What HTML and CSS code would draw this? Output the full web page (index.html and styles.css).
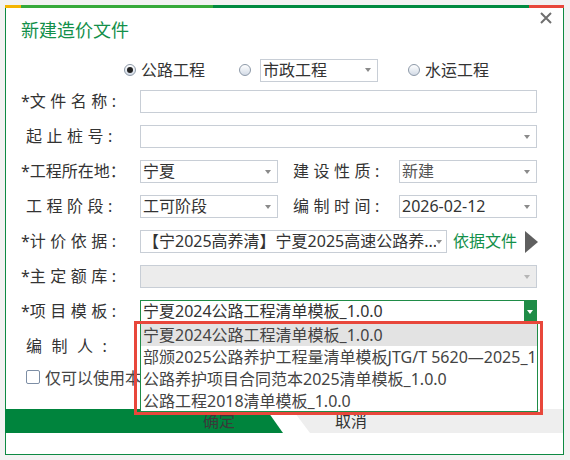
FILE: index.html
```html
<!DOCTYPE html>
<html lang="zh-CN">
<head>
<meta charset="utf-8">
<title>新建造价文件</title>
<link rel="stylesheet" href="styles.css">
</head>
<body>
<div class="dialog">
  <div class="stripe"><span class="s-yellow"></span><span class="s-lgreen"></span><span class="s-dgreen"></span><span class="s-red"></span></div>
  <div class="header">
    <div class="title">新建造价文件</div>
    <svg class="close" viewBox="0 0 12 12" width="12" height="12"><path d="M1 1L11 11M11 1L1 11" stroke="#6f6f6f" stroke-width="2" fill="none"/></svg>
  </div>

  <div class="radios">
    <span class="dot on"></span><span class="rtext">公路工程</span>
    <span class="dot d2"></span>
    <span class="field select w-sz"><span class="txt">市政工程</span><i class="caret"></i></span>
    <span class="dot d3"></span><span class="rtext">水运工程</span>
  </div>

  <div class="form">
    <div class="row">
      <span class="lbl"><b class="req">*</b><span class="sp">文件名称:</span></span>
      <span class="field w-full"></span>
    </div>
    <div class="row">
      <span class="lbl nostar"><span class="sp">起止桩号:</span></span>
      <span class="field select w-full"><span class="txt"></span><i class="caret"></i></span>
    </div>
    <div class="row">
      <span class="lbl"><b class="req">*</b>工程所在地：</span>
      <span class="field select w-half"><span class="txt">宁夏</span><i class="caret"></i></span>
      <span class="lbl2"><span class="sp">建设性质:</span></span>
      <span class="field select w-half"><span class="txt muted">新建</span><i class="caret"></i></span>
    </div>
    <div class="row">
      <span class="lbl nostar"><span class="sp">工程阶段:</span></span>
      <span class="field select w-half"><span class="txt">工可阶段</span><i class="caret"></i></span>
      <span class="lbl2"><span class="sp">编制时间:</span></span>
      <span class="field select w-half"><span class="txt">2026-02-12</span><i class="caret"></i></span>
    </div>
    <div class="row">
      <span class="lbl"><b class="req">*</b><span class="sp">计价依据:</span></span>
      <span class="field select w-jj"><span class="txt">【宁2025高养清】宁夏2025高速公路养...</span><i class="caret small"></i></span>
      <span class="link">依据文件</span>
      <svg class="play" viewBox="0 0 13 22" width="13" height="22"><path d="M0 0L13 11L0 22Z" fill="#5f5f5f"/></svg>
    </div>
    <div class="row">
      <span class="lbl"><b class="req">*</b><span class="sp">主定额库:</span></span>
      <span class="field select disabled w-full"><span class="txt"></span><i class="caret"></i></span>
    </div>
    <div class="row">
      <span class="lbl"><b class="req">*</b><span class="sp">项目模板:</span></span>
      <span class="field active w-full">
        <span class="txt">宁夏2024公路工程清单模板_1.0.0</span>
        <span class="gbtn"><i class="caret white"></i></span>
        <ul class="list">
          <li class="hl">宁夏2024公路工程清单模板_1.0.0</li>
          <li>部颁2025公路养护工程量清单模板JTG/T 5620—2025_1.0.0</li>
          <li>公路养护项目合同范本2025清单模板_1.0.0</li>
          <li>公路工程2018清单模板_1.0.0</li>
        </ul>
        <span class="mark"></span>
      </span>
    </div>
    <div class="row">
      <span class="lbl nostar"><span class="sp2">编制人:</span></span>
    </div>
  </div>

  <div class="check"><span class="box"></span><span>仅可以使用本</span></div>

  <div class="buttons">
    <div class="btn ok">确定</div>
    <div class="btn cancel">取消</div>
  </div>
</div>
</body>
</html>
```

FILE: styles.css
```css
* { box-sizing: border-box; }
html, body { margin: 0; }
body {
  background: #f2f2f2;
  padding: 5px 0 0 5px;
  font-family: "Noto Sans", "Noto Sans CJK SC", sans-serif;
  font-size: 16px;
  color: #333;
}

.dialog {
  position: relative;
  width: 559px;
  height: 450px;
  background: #fff;
  border: 1px solid #0e8a43;
  border-top: 0;
  display: flex;
  flex-direction: column;
}

.stripe { display: flex; height: 3px; margin: 0 -1px; flex: none; }
.s-yellow { width: 16px; background: #f4b400; }
.s-lgreen { width: 192px; background: #36a93a; }
.s-dgreen { flex: 1; background: #008a40; }
.s-red { width: 35px; background: #e8473b; }

.header {
  display: flex;
  justify-content: space-between;
  align-items: flex-start;
  height: 40px;
  padding: 0 11px 0 15px;
  flex: none;
}
.title { margin-top: 10px; font-size: 18px; line-height: 24px; color: #13904a; }
.close { margin-top: 4px; }

.radios {
  display: flex;
  align-items: center;
  height: 24px;
  margin-top: 10px;
  padding-left: 118px;
  flex: none;
}
.dot {
  width: 12px; height: 12px;
  border-radius: 50%;
  border: 1px solid #8d99a8;
  background: linear-gradient(#ffffff, #d3dbe6);
  display: flex; align-items: center; justify-content: center;
  flex: none;
}
.dot.on::after { content: ""; width: 6px; height: 6px; border-radius: 50%; background: #222; }
.rtext { margin-left: 5px; line-height: 24px; }
.dot.d2 { margin-left: 34px; }
.dot.d3 { margin-left: 30px; }
.w-sz { width: 118px; height: 24px; margin-left: 9px; }

.form {
  display: flex;
  flex-direction: column;
  gap: 12px;
  margin-top: 8px;
  padding-left: 15px;
  flex: none;
}
.row { display: flex; align-items: center; height: 23px; }
.lbl { width: 119px; line-height: 23px; white-space: nowrap; flex: none; }
.lbl.nostar { padding-left: 5px; }
.req { font-weight: normal; }
.sp { letter-spacing: 4.5px; }
.sp2 { letter-spacing: 9.5px; }
.lbl2 { width: 106px; margin-left: 15px; line-height: 23px; white-space: nowrap; flex: none; }

.field {
  position: relative;
  display: flex;
  align-items: center;
  height: 23px;
  border: 1px solid #c8ced6;
  background: #fff;
  flex: none;
}
.txt {
  flex: 1;
  min-width: 0;
  padding-left: 2px;
  line-height: 21px;
  white-space: nowrap;
  overflow: hidden;
  color: #333;
}
.txt.muted { color: #555; }
.caret {
  width: 0; height: 0;
  border-left: 3.5px solid transparent;
  border-right: 3.5px solid transparent;
  border-top: 4px solid #8a8a8a;
  margin-right: 6px;
  flex: none;
}
.caret.small { margin-right: 4px; }
.w-full { width: 397px; }
.w-half { width: 138px; }
.w-jj { width: 307px; }
.disabled { background: #ececec; }
.disabled .caret { border-top-color: #b5b5b5; }

.link { margin-left: 6px; color: #13904a; line-height: 23px; white-space: nowrap; }
.play { margin-left: 8px; flex: none; }

.active { border-color: #1f8c47; }
.gbtn {
  align-self: stretch;
  width: 12px;
  background: #1f8c47;
  display: flex; align-items: center; justify-content: center;
}
.caret.white { border-top-color: #fff; margin-right: 0; }

.list {
  position: absolute;
  left: -1px;
  top: 22px;
  width: 398px;
  height: 89px;
  margin: 0;
  padding: 0;
  list-style: none;
  background: #fff;
  border: 1px solid #1f8c47;
  overflow: hidden;
  z-index: 2;
}
.list li {
  height: 22px;
  line-height: 22px;
  padding-left: 2px;
  white-space: nowrap;
  overflow: hidden;
  color: #444;
}
.list li.hl { background: #e3e3e3; }
.mark {
  position: absolute;
  left: -7px;
  top: 20px;
  width: 409px;
  height: 94px;
  border: 3px solid #e8473b;
  z-index: 3;
}

.check {
  display: flex;
  align-items: center;
  height: 23px;
  margin-top: 7px;
  padding-left: 20px;
  white-space: nowrap;
  color: #444;
  flex: none;
}
.box {
  width: 14px; height: 14px;
  border: 1px solid #7d8ea5;
  border-radius: 2px;
  margin-right: 5px;
  background: #fff;
  flex: none;
}

.buttons {
  display: flex;
  height: 24px;
  margin-top: 21px;
  flex: none;
}
.btn { line-height: 24px; color: #333; white-space: nowrap; }
.ok {
  width: 278px;
  margin-left: -1px;
  padding-left: 198px;
  background: #00843d;
  color: #3a3a3a;
  clip-path: polygon(0 0, 261px 0, 100% 100%, 0 100%);
}
.cancel {
  flex: 1;
  margin-left: 9px;
  padding-left: 43px;
  background: #eeeeee;
  clip-path: polygon(0 0, 100% 0, 100% 100%, 18px 100%);
}
```
